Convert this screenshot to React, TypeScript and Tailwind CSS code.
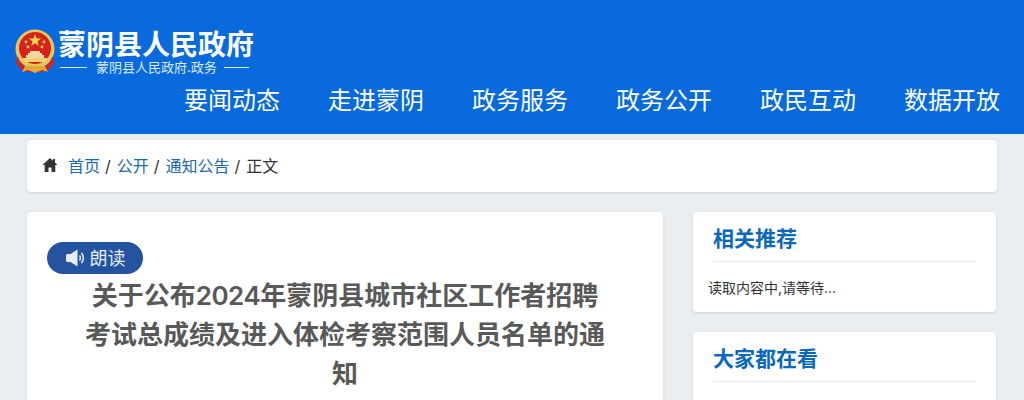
const cjk = "font-['Inter','Noto_Sans_CJK_SC',sans-serif]"

function Emblem() {
  return (
    <svg width="40" height="46" viewBox="0 0 40 46" className="shrink-0">
      <circle cx="20" cy="20" r="19.5" fill="#e8c65a" />
      <circle cx="20" cy="19" r="16" fill="#d9211c" />
      <polygon points="20,5 21.5,9.6 26.2,9.6 22.4,12.4 23.8,17 20,14.2 16.2,17 17.6,12.4 13.8,9.6 18.500,9.6" fill="#f6d84c" />
      <circle cx="11" cy="13" r="1.4" fill="#f6d84c" />
      <circle cx="29" cy="13" r="1.4" fill="#f6d84c" />
      <circle cx="13" cy="18" r="1.4" fill="#f6d84c" />
      <circle cx="27" cy="18" r="1.4" fill="#f6d84c" />
      <path d="M15 22h10v2h2v2h2v3H11v-3h2v-2h2z" fill="#f2d9a0" />
      <rect x="8" y="29" width="24" height="4" fill="#f0d070" />
      <path d="M3 27c1 7 6 11 12 12h10c6-1 11-5 12-12l2 6c-2 6-8 10-14 10H15C9 43 3 39 1 33z" fill="#d9211c" />
      <path d="M10 37h20l3 6-6-2-7 3-7-3-6 2z" fill="#e3a83a" />
    </svg>
  )
}

function CardHead({ title }: { title: string }) {
  return (
    <div className="ml-5 mr-5 pt-[10px] border-b border-[#e9ecef] h-[50px]">
      <h3 className="text-[21px] leading-[34px] font-bold text-[#0a68bd]">{title}</h3>
    </div>
  )
}

export default function App() {
  const nav = ["要闻动态", "走进蒙阴", "政务服务", "政务公开", "政民互动", "数据开放"]

  return (
    <div className={`${cjk} h-[400px] overflow-hidden bg-[#eaeef1] text-[#333]`}>
      <header className="h-[134px] bg-[#086add] flex flex-col">
        <div className="flex items-center pl-[15px] pt-[29px]">
          <Emblem />
          <div className="ml-1 text-white -translate-x-px">
            <div className="text-[28px] leading-[30px] font-bold">蒙阴县人民政府</div>
            <div className="flex items-center pl-[2px] text-[13px] leading-[14px] text-[#dcebfb]">
              <span className="w-[27px] h-px bg-[#dcebfb]"></span>
              <span className="ml-[9px] mr-[7px]">蒙阴县人民政府.政务</span>
              <span className="w-[25px] h-px bg-[#dcebfb]"></span>
            </div>
          </div>
        </div>
        <nav className="flex justify-end gap-12 pr-6 mt-[9px] text-white text-[24px] leading-[34px]">
          {nav.map((n) => (
            <a key={n} href="#">{n}</a>
          ))}
        </nav>
      </header>

      <div className="mx-[27px] mt-[6px] h-[52px] bg-white rounded shadow-[0_1px_3px_rgba(0,0,0,0.12)] flex items-center pl-[15px] text-[16px]">
        <svg width="16" height="16" viewBox="0 0 16 16" className="mr-[10px] -mt-[2px]" fill="#333">
          <path d="M8 1 0.5 8h2.2v7h3.800v-4.500h3V15h3.800V8h2.200L13 5.600V2h-2v1.700z" />
        </svg>
        <a href="#" className="text-[#1a69b3]">首页</a>
        <span className="ml-[5px] mr-[6px]">/</span>
        <a href="#" className="text-[#1a69b3]">公开</a>
        <span className="ml-[5px] mr-[6px]">/</span>
        <a href="#" className="text-[#1a69b3]">通知公告</a>
        <span className="ml-[5px] mr-[6px]">/</span>
        <span>正文</span>
      </div>

      <div className="ml-[27px] mr-[28px] mt-5 flex justify-between items-start">
        <main className="w-[636px] h-[300px] bg-white rounded shadow-[0_1px_3px_rgba(0,0,0,0.12)] pt-[30px] px-5">
          <div className="w-24 h-8 rounded-full bg-[#24539f] text-[#e6edf7] flex items-center justify-center gap-[3px] text-[18px]">
            <svg width="22" height="20" viewBox="0 0 22 20">
              <path d="M1 7.500c0-.8.6-1.500 1.500-1.500H5.500l7-4.500v17l-7-4.500H2.500C1.600 14 1 13.300 1 12.500z" fill="#e6edf7" />
              <path d="M14.500 7.500c1 1.500 1 3.500 0 5M16.500 5c2.200 3 2.200 7 0 10" fill="none" stroke="#e6edf7" strokeWidth="1.500" />
            </svg>
            <span>朗读</span>
          </div>
          <h1 className="mx-auto mt-[2px] w-[528px] text-center text-[#595959] text-[26px] leading-[39px] font-semibold">
            关于公布<span className="tracking-[-0.5px]">2024</span>年蒙阴县城市社区工作者招聘考试总成绩及进入体检考察范围人员名单的通知
          </h1>
        </main>

        <aside className="w-[303px] flex flex-col gap-5">
          <section className="h-[100px] bg-white rounded shadow-[0_1px_3px_rgba(0,0,0,0.12)]">
            <CardHead title="相关推荐" />
            <p className="pl-[15px] pt-[16px] text-[14px] leading-[20px]">读取内容中,请等待...</p>
          </section>
          <section className="h-[100px] bg-white rounded shadow-[0_1px_3px_rgba(0,0,0,0.12)]">
            <CardHead title="大家都在看" />
          </section>
        </aside>
      </div>
    </div>
  )
}
